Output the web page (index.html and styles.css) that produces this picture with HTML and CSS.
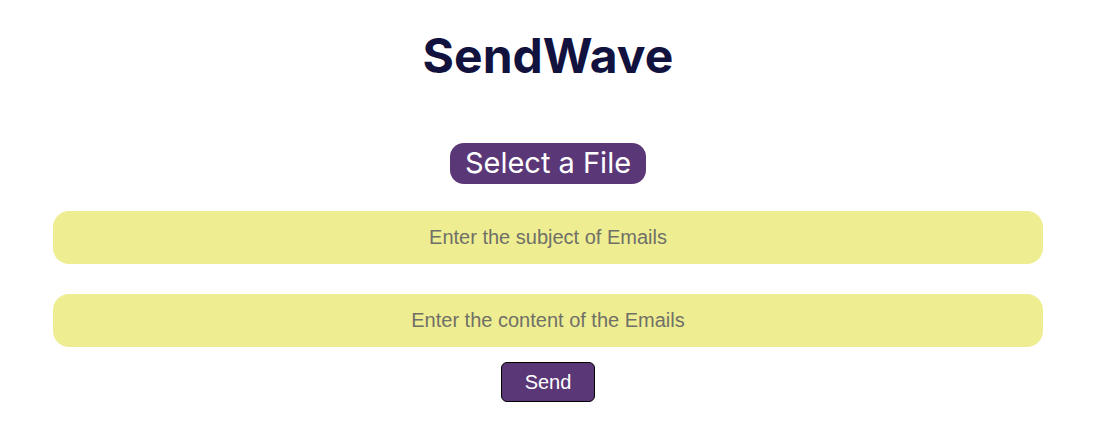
FILE: index.html
```html
<!DOCTYPE html>
<html>
<head>
<meta charset="utf-8">
<link rel="stylesheet" href="styles.css">
</head>
<body>
<main class="app">
  <h1 class="title">SendWave</h1>
  <button class="file-btn">Select a File</button>
  <input class="field field-subject" type="text" placeholder="Enter the subject of Emails">
  <input class="field field-content" type="text" placeholder="Enter the content of the Emails">
  <button class="send-btn">Send</button>
</main>
</body>
</html>
```
FILE: styles.css
```css
html, body {
  margin: 0;
  padding: 0;
  background: #ffffff;
}
.app {
  display: flex;
  flex-direction: column;
  align-items: center;
  padding: 0 53px;
}
.title {
  font-family: Inter, "Noto Sans", sans-serif;
  font-weight: 700;
  font-size: 48px;
  line-height: 58px;
  color: #12123f;
  margin: 27px 0 0 0;
}
.file-btn {
  margin-top: 58px;
  font-family: Inter, sans-serif;
  font-size: 29px;
  line-height: 34px;
  color: #ffffff;
  background: #5a3776;
  border: none;
  border-radius: 14px;
  padding: 3px 15px 4px;
}
.field {
  box-sizing: border-box;
  width: 100%;
  height: 53px;
  background: #eeed91;
  border: none;
  border-radius: 16px;
  text-align: center;
  font-family: "Liberation Sans", Arial, sans-serif;
  font-size: 20px;
  color: #333;
  outline: none;
}
.field::placeholder {
  color: #707068;
}
.field-subject {
  margin-top: 27px;
}
.field-content {
  margin-top: 30px;
}
.send-btn {
  margin-top: 15px;
  box-sizing: border-box;
  width: 94px;
  height: 40px;
  background: #5a3776;
  color: #ffffff;
  border: 1px solid #000000;
  border-radius: 6px;
  font-family: "Liberation Sans", Arial, sans-serif;
  font-size: 20px;
}
```
